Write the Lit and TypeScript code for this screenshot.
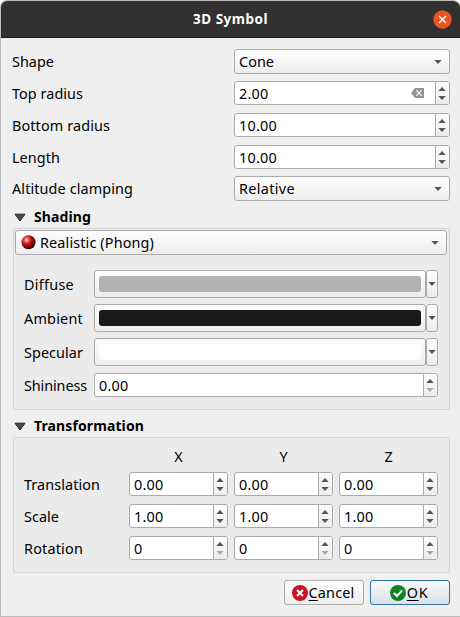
import { LitElement, html, svg, css, nothing } from "lit";
import { customElement, property } from "lit/decorators.js";

/** A run of text whose letter spacing is adjusted to fill a given width. */
@customElement("fit-text")
class FitText extends LitElement {
  static styles = css`
    :host { display: inline-block; white-space: pre; }
    u { text-decoration-thickness: 1px; text-underline-offset: 2px; }
  `;
  @property() text = "";
  @property({ type: Number }) w = 0;
  @property({ type: Boolean }) mnemonic = false;
  render() {
    return this.mnemonic
      ? html`<span><u>${this.text[0]}</u>${this.text.slice(1)}</span>`
      : html`<span>${this.text}</span>`;
  }
  updated() {
    const s = this.renderRoot.querySelector("span") as HTMLElement;
    s.style.letterSpacing = "0";
    const n = this.text.length;
    const natural = s.getBoundingClientRect().width;
    if (this.w && n) s.style.letterSpacing = `${(this.w - natural) / n}px`;
  }
}

const arrow = (cls = "") => html`<svg class="arrow ${cls}" width="8" height="4" viewBox="0 0 8 4"><path d="M0.3 0H7.7L4 4Z" /></svg>`;

@customElement("combo-box")
class ComboBox extends LitElement {
  static styles = css`
    :host {
      display: flex; align-items: center; box-sizing: border-box; height: 25px;
      border: 1px solid #aaa; border-radius: 3px; padding: 0 7px 0 4px;
      background: linear-gradient(#fefefe, #ededed);
    }
    .text { flex: 1; line-height: 23px; }
    .arrow { fill: #555; display: block; }
    .ball { display: block; margin: 0 4px 0 1px; }
  `;
  @property() text = "";
  @property({ type: Number }) w = 0;
  @property({ type: Boolean }) ball = false;
  render() {
    return html`
      ${this.ball
        ? html`<svg class="ball" width="15" height="15" viewBox="0 0 15 15">
            <defs>
              <radialGradient id="g" cx=".36" cy=".33" r=".65">
                <stop offset="0" stop-color="#ffe0dc" /><stop offset=".22" stop-color="#e26a62" />
                <stop offset=".5" stop-color="#c11212" /><stop offset=".8" stop-color="#7c0505" />
                <stop offset="1" stop-color="#2a0000" />
              </radialGradient>
            </defs>
            <circle cx="7.5" cy="7.3" r="7" fill="url(#g)" />
          </svg>`
        : nothing}
      <span class="text"><fit-text .text=${this.text} .w=${this.w}></fit-text></span>
      ${arrow()}
    `;
  }
}

@customElement("spin-box")
class SpinBox extends LitElement {
  static styles = css`
    :host {
      display: flex; box-sizing: border-box; height: 24px; overflow: hidden;
      border: 1px solid #aaa; border-radius: 3px; background: #fff;
    }
    .text { flex: 1; line-height: 24px; padding-left: 4px; }
    .clear { display: block; margin: 6px 11px 0 0; }
    .steps {
      flex: 0 0 14px; box-sizing: border-box; border-left: 1px solid #aaa;
      background: linear-gradient(#fdfdfd, #ededed);
      display: flex; flex-direction: column; align-items: center; gap: 5px; padding: 5px 1px 0 0;
    }
    .arrow { fill: #555; display: block; }
    .up { transform: scaleY(-1); }
    .off { fill: #aaa; }
  `;
  @property() text = "";
  @property({ type: Number }) w = 0;
  @property({ type: Boolean }) clearable = false;
  @property({ type: Boolean }) atMin = false;
  render() {
    return html`
      <span class="text"><fit-text .text=${this.text} .w=${this.w}></fit-text></span>
      ${this.clearable
        ? html`<svg class="clear" width="13" height="10" viewBox="0 0 13 10">
            <path d="M4 0H13V10H4L0 5Z" fill="#929292" />
            <path d="M5.3 2.2L10.7 7.8M10.7 2.2L5.3 7.8" stroke="#fff" stroke-width="1.1" />
          </svg>`
        : nothing}
      <span class="steps">${arrow("up")}${arrow(this.atMin ? "off" : "")}</span>
    `;
  }
}

@customElement("color-button")
class ColorButton extends LitElement {
  static styles = css`
    :host { display: grid; grid-template-columns: 332px 12px; height: 28px; }
    .face, .drop {
      box-sizing: border-box; border: 1px solid #aaa; border-radius: 3px;
      background: linear-gradient(#fdfdfd, #ededed);
    }
    .face { padding: 5px 4px; }
    .swatch { height: 16px; border-radius: 3px; }
    .drop { display: flex; align-items: center; justify-content: center; }
    .arrow { fill: #555; flex: none; }
  `;
  @property() color = "";
  render() {
    return html`
      <div class="face"><div class="swatch" style="background:${this.color}"></div></div>
      <div class="drop">${arrow()}</div>
    `;
  }
}

@customElement("app-root")
class AppRoot extends LitElement {
  static styles = css`
    :host {
      display: block; width: 460px; height: 617px; background: #fff;
      font: 14.4px/24px "Noto Sans", "Open Sans", sans-serif; color: #000;
    }
    .window {
      box-sizing: border-box; height: 617px; background: #efefef; overflow: hidden;
      border: 1px solid #bcbcbc; border-right: 0; border-radius: 7px 7px 0 0;
      display: flex; flex-direction: column;
    }
    .title {
      height: 37px; box-sizing: border-box; background: #323030; border-bottom: 1px solid #1c1a1a;
      display: grid; grid-template-columns: 1fr auto 1fr; align-items: center;
      color: #fff; font-weight: 700; font-size: 13.5px; padding-right: 8px;
    }
    .title fit-text { grid-column: 2; margin-left: 8px; line-height: 26px; }
    .close { justify-self: end; display: block; }
    .body { padding: 11px 10px 0 12px; display: flex; flex-direction: column; }
    .form { display: grid; grid-template-columns: 222px 1fr; grid-template-rows: 32px 32px 32px 31px 25px; align-items: start; margin-left: -1px; }
    .low { line-height: 26px; }
    .head { display: flex; align-items: center; height: 24px; font-weight: 700; font-size: 14px; padding-left: 1px; gap: 8px; }
    .head svg { display: block; }
    .shade { margin-top: 4px; }
    .trans { margin-top: 4px; }
    .group { border: 1px solid #d4d4d4; border-radius: 2px; background: #ebebeb; box-sizing: border-box; }
    .g1 { height: 182px; padding: 1px 2px 0 1px; margin-top: -1px; }
    .rows { display: grid; grid-template-columns: 70px 344px; grid-template-rows: 34px 34px 35px 24px; padding: 15px 0 0 9px; align-items: start; }
    .tall { line-height: 29px; }
    .g2 { height: 136px; margin-top: -1px; padding: 7px 0 0 10px; display: grid; grid-template-columns: 99px 99px 99px 99px; column-gap: 6px; grid-template-rows: 27px 32px 32px 24px; align-items: start; }
    .axis { text-align: center; }
    .actions { display: flex; justify-content: flex-end; gap: 6px; margin-top: 7px; }
    .btn {
      box-sizing: border-box; width: 80px; height: 25px; border: 1px solid #aaa; border-radius: 3px; padding-right: 2px;
      background: linear-gradient(#fefefe, #ededed); display: flex; align-items: center; justify-content: center; gap: 1px; line-height: 23px;
    }
    .btn svg { display: block; }
    .ok { border-color: #2f74a5; background: linear-gradient(#f8fafc, #d9e1e8); }
  `;

  private head(text: string, w: number, cls: string) {
    return html`<div class="head ${cls}">
      <svg width="12" height="9" viewBox="0 0 12 9"><path d="M1 1.2H11L6 8Z" fill="#4b4b4b" stroke="#222" stroke-linejoin="round" /></svg>
      <fit-text .text=${text} .w=${w}></fit-text>
    </div>`;
  }

  private label(text: string, w: number, cls = "low") {
    return html`<fit-text class=${cls} .text=${text} .w=${w}></fit-text>`;
  }

  private badge(fill: string, mark: string) {
    return html`<svg width="16" height="16" viewBox="0 0 16 16">
      <circle cx="8" cy="8" r="8" fill=${fill} />
      ${svg`<path d=${mark} fill="none" stroke="#fff" stroke-width="2" />`}
    </svg>`;
  }

  render() {
    const colors: [string, number, string][] = [
      ["Diffuse", 50, "#b2b2b2"],
      ["Ambient", 59, "#1a1a1a"],
      ["Specular", 59, "#ffffff"],
    ];
    const transform: [string, number, string, number, boolean][] = [
      ["Translation", 76, "0.00", 29.5, false],
      ["Scale", 35, "1.00", 29.5, false],
      ["Rotation", 59, "0", 9, true],
    ];
    return html`
      <div class="window">
        <div class="title">
          <fit-text text="3D Symbol" w="75"></fit-text>
          <svg class="close" width="19" height="19" viewBox="0 0 19 19">
            <circle cx="9.5" cy="9.5" r="9.2" fill="#e95420" />
            <path d="M6 6L13 13M13 6L6 13" stroke="#fff" stroke-width="1.4" />
          </svg>
        </div>
        <div class="body">
          <div class="form">
            ${this.label("Shape", 42)}<combo-box text="Cone" w="35"></combo-box>
            ${this.label("Top radius", 71)}<spin-box text="2.00" w="29.5" clearable></spin-box>
            ${this.label("Bottom radius", 98)}<spin-box text="10.00" w="38"></spin-box>
            ${this.label("Length", 48)}<spin-box text="10.00" w="38"></spin-box>
            ${this.label("Altitude clamping", 121)}<combo-box text="Relative" w="56"></combo-box>
          </div>
          ${this.head("Shading", 57, "shade")}
          <div class="group g1">
            <combo-box text="Realistic (Phong)" w="114" ball></combo-box>
            <div class="rows">
              ${colors.map(([n, w, c]) => html`${this.label(n, w, "tall")}<color-button .color=${c}></color-button>`)}
              ${this.label("Shininess", 63)}<spin-box text="0.00" w="29.5" .atMin=${true}></spin-box>
            </div>
          </div>
          ${this.head("Transformation", 110, "trans")}
          <div class="group g2">
            <span></span>
            ${["X", "Y", "Z"].map((a) => html`<span class="axis">${a}</span>`)}
            ${transform.map(
              ([n, w, v, vw, min]) => html`${this.label(n, w)}
              ${[0, 1, 2].map(() => html`<spin-box .text=${v} .w=${vw} .atMin=${min}></spin-box>`)}`
            )}
          </div>
          <div class="actions">
            <div class="btn">${this.badge("#c7162b", "M5 5L11 11M11 5L5 11")}<fit-text text="Cancel" w="46" mnemonic></fit-text></div>
            <div class="btn ok">${this.badge("#0e8420", "M3.8 8L7 11L12.2 5.4")}<fit-text text="OK" w="21.5" mnemonic></fit-text></div>
          </div>
        </div>
      </div>
    `;
  }
}
